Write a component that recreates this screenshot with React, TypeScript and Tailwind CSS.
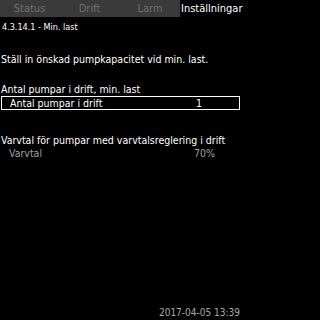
import React from "react";

export default function App() {
  const font = { fontFamily: '"DejaVu Sans Condensed", "DejaVu Sans", sans-serif' };
  return (
    <div className="w-full min-w-[242px] h-[320px] bg-black text-white flex flex-col overflow-hidden" style={font}>
      <div className="flex h-[17px] shrink-0">
        <div className="flex w-[180px] bg-[#3a3a3a] text-[#707070] text-[11px] leading-[17px]">
          <div className="w-[59px] text-center">Status</div>
          <div className="w-[61px] text-center">Drift</div>
          <div className="w-[60px] text-center">Larm</div>
        </div>
        <div className="flex-1 text-[11px] leading-[17px] pl-[1px] text-white whitespace-nowrap">Inställningar</div>
      </div>
      <div className="text-[9px] leading-[12px] mt-[4px] pl-[2px]">4.3.14.1 - Min. last</div>
      <div className="text-[10.5px] leading-[13px] mt-[20px] pl-[1px]">Ställ in önskad pumpkapacitet vid min. last.</div>
      <div className="text-[10.5px] leading-[13px] mt-[17px] pl-[1px]">Antal pumpar i drift, min. last</div>
      <div className="flex justify-between items-center ml-[1px] w-[239px] h-[14px] border border-white text-[10.5px] leading-[12px]">
        <span className="pl-[8px]">Antal pumpar i drift</span>
        <span className="pr-[37px]">1</span>
      </div>
      <div className="text-[10.5px] leading-[13px] mt-[24px] pl-[1px]">Varvtal för pumpar med varvtalsreglering i drift</div>
      <div className="flex justify-between w-[242px] text-[10.5px] leading-[13px] text-[#a0a0a0]">
        <span className="pl-[9px]">Varvtal</span>
        <span className="pr-[27px]">70%</span>
      </div>
      <div className="flex-1" />
      <div className="w-[242px] text-[10px] leading-[10px] text-[#a8a8a8] text-right pr-[2px] mb-[2px]">2017-04-05 13:39</div>
    </div>
  );
}
